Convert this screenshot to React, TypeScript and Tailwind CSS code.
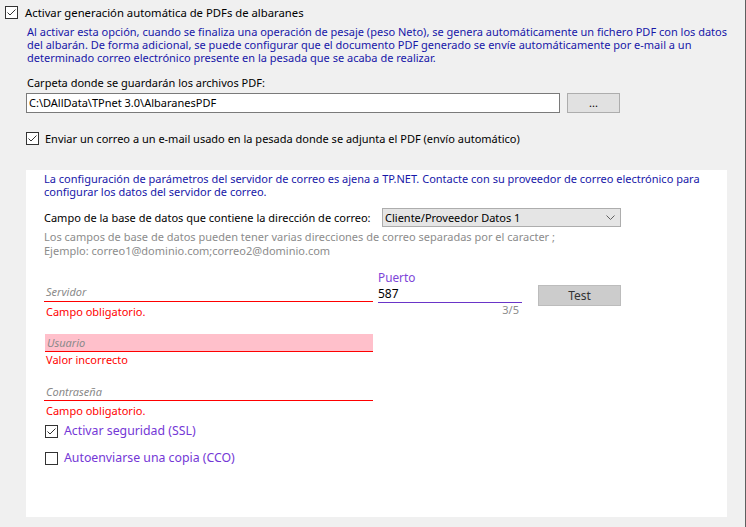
import React from 'react';

const font = { fontFamily: '"Segoe UI", "Noto Sans", sans-serif' };

const WinCheck = ({ checked }: { checked: boolean }) => (
  <svg width="13" height="13" viewBox="0 0 13 13" className="shrink-0">
    <rect x="0.5" y="0.5" width="12" height="12" fill="#ffffff" stroke="#333333" />
    {checked && <path d="M2.5 6.5 L5 9 L10.5 3.5" fill="none" stroke="#333333" strokeWidth="1" />}
  </svg>
);

const App = () => {
  return (
    <div
      className="w-[746px] h-[527px] bg-[#f0f0f0] border-r border-[#5f5f5f] text-[11px] text-black overflow-hidden whitespace-nowrap"
      style={font}
    >
      {/* Activar generación */}
      <div className="flex items-center h-[13px] mt-[6px] pl-[5px] gap-[7px]">
        <WinCheck checked />
        <span className="leading-[13px] text-[11.3px]">Activar generación automática de PDFs de albaranes</span>
      </div>

      <p className="mt-[6px] pl-[27px] leading-[13px] text-[#1717a8]">
        Al activar esta opción, cuando se finaliza una operación de pesaje (peso Neto), se genera automáticamente un fichero PDF con los datos
        <br />
        del albarán. De forma adicional, se puede configurar que el documento PDF generado se envíe automáticamente por e-mail a un
        <br />
        determinado correo electrónico presente en la pesada que se acaba de realizar.
      </p>

      <div className="mt-[12px] pl-[27px] leading-[14px]">Carpeta donde se guardarán los archivos PDF:</div>

      <div className="flex mt-[3px] pl-[26px] gap-[7px]">
        <div className="w-[534px] h-[20px] bg-white border border-[#7a7a7a] flex items-center px-[2px] leading-[16px]">
          C:\DAllData\TPnet 3.0\AlbaranesPDF
        </div>
        <div className="w-[53px] h-[20px] bg-[#e1e1e1] border border-[#adadad] flex items-center justify-center leading-[16px]">
          ...
        </div>
      </div>

      {/* Enviar correo */}
      <div className="flex items-center h-[13px] mt-[19px] pl-[26px] gap-[6px]">
        <WinCheck checked />
        <span className="leading-[13px]">Enviar un correo a un e-mail usado en la pesada donde se adjunta el PDF (envío automático)</span>
      </div>

      {/* White panel */}
      <div className="mt-[25px] ml-[26px] w-[701px] h-[347px] bg-white pl-[18px]">
        <p className="pt-[2px] leading-[13px] text-[#1717a8]">
          La configuración de parámetros del servidor de correo es ajena a TP.NET. Contacte con su proveedor de correo electrónico para
          <br />
          configurar los datos del servidor de correo.
        </p>

        <div className="flex items-center mt-[10px] h-[19px]">
          <span className="w-[338px] leading-[14px]">Campo de la base de datos que contiene la dirección de correo:</span>
          <div className="w-[239px] h-[19px] bg-[#e5e5e5] border border-[#adadad] flex items-center justify-between pl-[2px] pr-[5px]">
            <span className="leading-[15px]">Cliente/Proveedor Datos 1</span>
            <svg width="9" height="5" viewBox="0 0 9 5">
              <path d="M0.5 0.5 L4.5 4.5 L8.5 0.5" fill="none" stroke="#606060" strokeWidth="1" />
            </svg>
          </div>
        </div>

        <p className="mt-[3px] leading-[14px] text-[#8c8c8c]">
          Los campos de base de datos pueden tener varias direcciones de correo separadas por el caracter ;
          <br />
          Ejemplo: correo1@dominio.com;correo2@dominio.com
        </p>

        {/* Fields */}
        <div className="flex mt-[10px]">
          <div className="w-[329px] pt-[15px]">
            <div className="h-[19px] border-b border-[#ff0000] flex items-center pl-[2px]">
              <span className="italic text-[#8a8a8a] leading-[14px]">Servidor</span>
            </div>
            <div className="mt-[2px] h-[16px] leading-[16px] pl-[2px] text-[#ff0000]">Campo obligatorio.</div>

            <div className="mt-[14px] ml-[1px] h-[18px] bg-[#ffc0cb] border-b border-[#ff0000] flex items-center pl-[2px]">
              <span className="italic text-[#8a8a8a] leading-[14px]">Usuario</span>
            </div>
            <div className="h-[16px] leading-[16px] pl-[2px] text-[#ff0000]">Valor incorrecto</div>

            <div className="mt-[15px] h-[18px] border-b border-[#ff0000] flex items-center pl-[2px]">
              <span className="italic text-[#8a8a8a] leading-[14px]">Contraseña</span>
            </div>
            <div className="mt-[2px] h-[16px] leading-[16px] pl-[2px] text-[#ff0000]">Campo obligatorio.</div>

            <div className="mt-[4px] h-[16px] flex items-center gap-[6px] pl-[1px]">
              <WinCheck checked />
              <span className="text-[#7437d6] text-[12.3px] leading-[16px]">Activar seguridad (SSL)</span>
            </div>
            <div className="mt-[11px] h-[16px] flex items-center gap-[6px] pl-[1px]">
              <WinCheck checked={false} />
              <span className="text-[#7437d6] text-[12.3px] leading-[16px]">Autoenviarse una copia (CCO)</span>
            </div>
          </div>

          <div className="ml-[5px] w-[144px] pt-[1px]">
            <div className="h-[16px] leading-[16px] text-[#7d45d8] text-[11.8px]">Puerto</div>
            <div className="h-[18px] border-b border-[#6a35c8] flex items-end leading-[16px] text-[12px]">587</div>
            <div className="h-[14px] leading-[14px] text-right pr-[3px] text-[#8c8c8c]">3/5</div>
          </div>

          <div className="ml-[16px] mt-[17px] w-[83px] h-[21px] bg-[#cccccc] border border-[#bcbcbc] flex items-center justify-center text-[#333333] text-[12px] leading-[16px]">
            Test
          </div>
        </div>
      </div>
    </div>
  );
};

export default App;
